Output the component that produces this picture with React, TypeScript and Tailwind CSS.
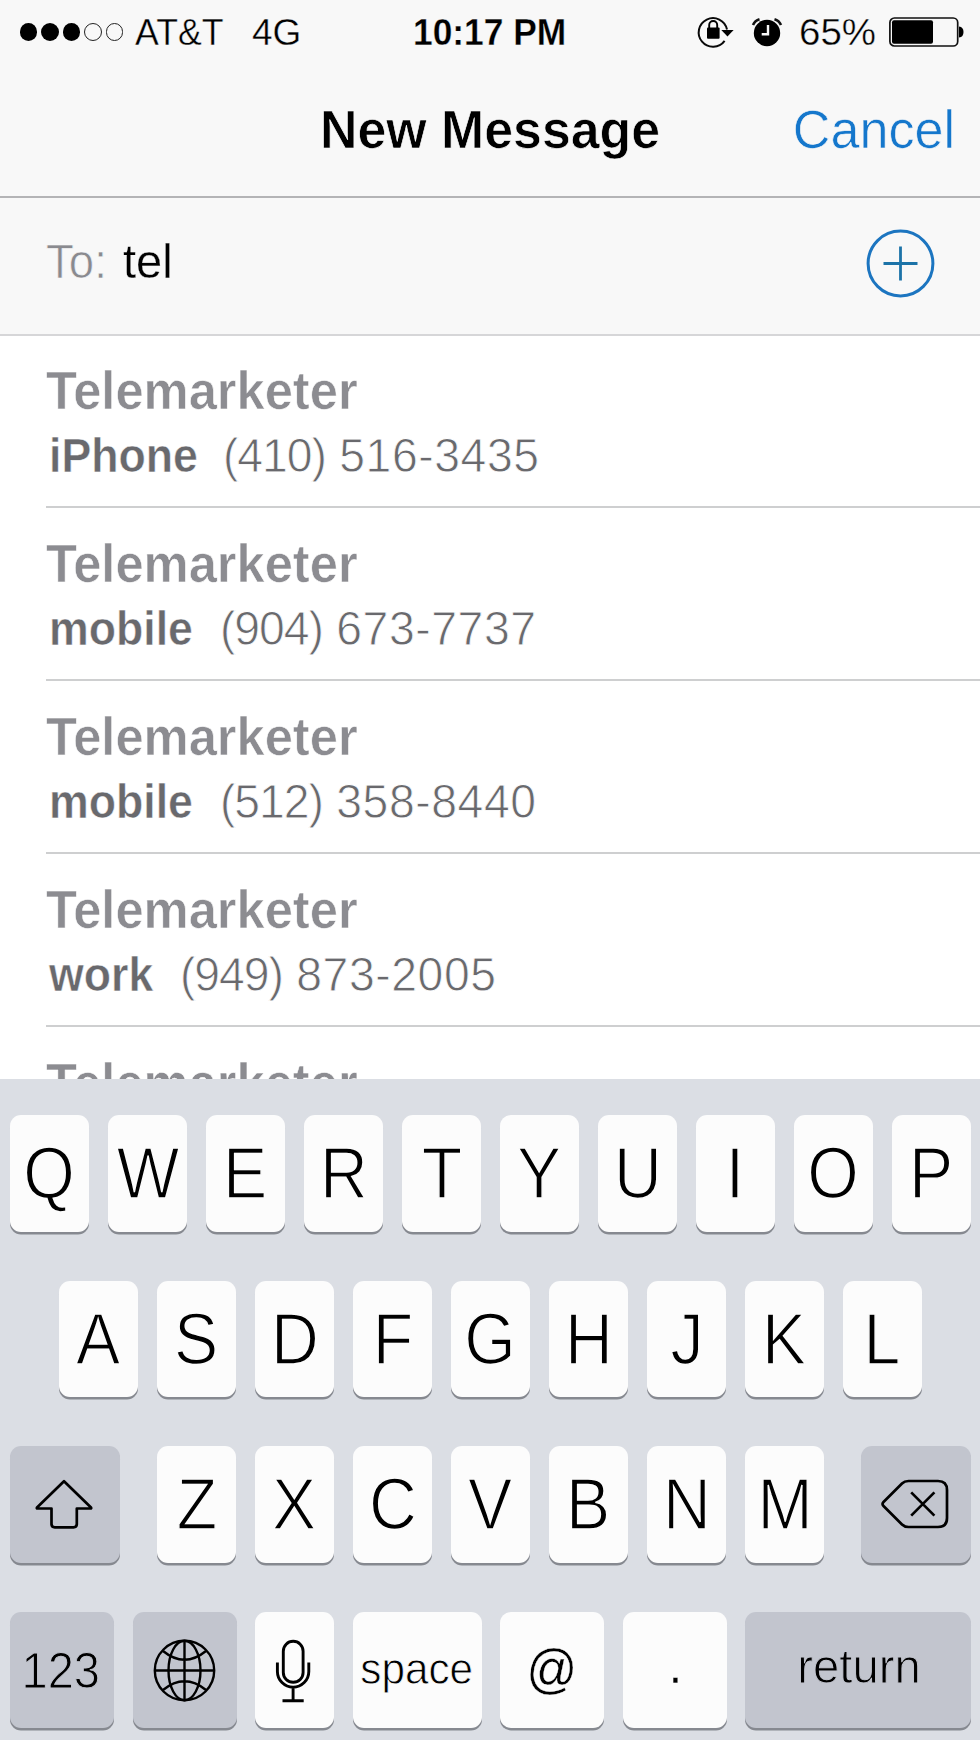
import type { ReactNode } from "react";

type Contact = { name: string; label: string; labelWidth: string; area: string; number: string };

const contacts: Contact[] = [
  { name: "Telemarketer", label: "iPhone", labelWidth: "w-[174px]", area: "(410)", number: " 516-3435" },
  { name: "Telemarketer", label: "mobile", labelWidth: "w-[171px]", area: "(904)", number: " 673-7737" },
  { name: "Telemarketer", label: "mobile", labelWidth: "w-[171px]", area: "(512)", number: " 358-8440" },
  { name: "Telemarketer", label: "work", labelWidth: "w-[131px]", area: "(949)", number: " 873-2005" },
];

function RotationLockIcon() {
  return (
    <svg className="h-[34px] w-[38px] shrink-0" viewBox="0 0 38 34" fill="none">
      <path d="M28.600 25.800A14.300 14.300 0 1 1 31 14.500" stroke="#0a0a0a" strokeWidth="2" />
      <path d="M25.300 15H37.600L31.500 21.600Z" fill="#000" />
      <rect x="11" y="12.600" width="12.600" height="11.200" rx="1" fill="#000" />
      <path d="M13.200 13.500V10a4 4 0 0 1 8 0v3.500" stroke="#000" strokeWidth="1.900" />
    </svg>
  );
}

function AlarmIcon() {
  return (
    <svg className="h-[30px] w-[32px] shrink-0" viewBox="0 0 32 30" fill="none">
      <circle cx="16" cy="16" r="13.2" fill="#000" />
      <path d="M2 8Q4 3.5 8.5 2.2M30 8Q28 3.5 23.5 2.2" stroke="#111" strokeWidth="2.6" />
      <path d="M17 8v9.2h-6.3" stroke="#f8f8f8" strokeWidth="2.4" />
    </svg>
  );
}

function BatteryIcon() {
  return (
    <svg className="h-[30px] w-[76px] shrink-0" viewBox="0 0 76 30" fill="none">
      <rect x="0.9" y="1" width="67.8" height="28" rx="4.5" stroke="#111" strokeWidth="1.7" />
      <rect x="3" y="3.3" width="41" height="23.4" rx="2" fill="#000" />
      <path d="M70 9.500q4.500.5 4.500 5.500t-4.500 5.500z" fill="#000" />
    </svg>
  );
}

function StatusBar() {
  return (
    <div className="flex h-16 items-center whitespace-nowrap text-[37px] leading-none text-black">
      <div className="flex w-[115px] shrink-0 gap-[4.3px] pl-[20px]">
        {[true, true, true, false, false].map((on, i) => (
          <span
            key={i}
            className={
              on
                ? "size-[17.2px] shrink-0 rounded-full bg-black"
                : "size-[17.2px] shrink-0 rounded-full border-[1.5px] border-[#222]"
            }
          />
        ))}
      </div>
      <span className="ml-5 w-[117px] shrink-0 origin-left scale-x-[0.965] [-webkit-text-stroke:0.4px_#f8f8f8]">AT&amp;T</span>
      <span className="w-[161px] shrink-0 [-webkit-text-stroke:0.4px_#f8f8f8]">4G</span>
      <span className="w-[283px] shrink-0 origin-left scale-x-[0.955] font-bold [-webkit-text-stroke:0.3px_#f8f8f8]">10:17 PM</span>
      <RotationLockIcon />
      <span className="w-[17px] shrink-0" />
      <AlarmIcon />
      <span className="ml-4 w-[90px] shrink-0 origin-left scale-x-[1.04] [-webkit-text-stroke:0.4px_#f8f8f8]">65%</span>
      <BatteryIcon />
    </div>
  );
}

function NavBar() {
  return (
    <div className="grid h-[134px] grid-cols-[1fr_auto_1fr] items-center border-b-2 border-[#b4b4b6] pb-[2px] leading-none whitespace-nowrap">
      <span />
      <h1 className="scale-x-[0.96] text-[54px] font-bold text-black [-webkit-text-stroke:0.7px_#f8f8f8]">New Message</h1>
      <button className="origin-right scale-x-[0.965] justify-self-end pr-[26px] text-[54px] text-[#1577cc] [-webkit-text-stroke:0.6px_#f8f8f8]">
        Cancel
      </button>
    </div>
  );
}

function Recipients() {
  return (
    <div className="flex h-[138px] items-center border-b-2 border-[#d6d6d8] pr-[45px] pl-[46px] text-[49px] leading-none">
      <span className="w-[77px] shrink-0 origin-left scale-x-[0.93] pb-[9px] text-[#8a8a8f] [-webkit-text-stroke:0.7px_#f8f8f8]">To:</span>
      <span className="origin-left scale-x-[0.96] pb-[9px] text-black [-webkit-text-stroke:0.3px_#f8f8f8]">tel</span>
      <svg className="mt-[-5px] ml-auto size-[69px]" viewBox="0 0 69 69" fill="none">
        <circle cx="34.5" cy="34.5" r="32.4" stroke="#1c75c0" strokeWidth="3" />
        <path d="M34.5 17.5v34M17.5 34.5h34" stroke="#1c73a8" strokeWidth="2.8" />
      </svg>
    </div>
  );
}

function ContactRow({ contact }: { contact: Contact }) {
  return (
    <div className="ml-[46px] flex h-[173px] shrink-0 flex-col border-b-2 border-[#cecfd0] pt-[23px] whitespace-nowrap">
      <div className="h-[66px] origin-left scale-x-[0.938] text-[54px] leading-[64px] font-bold text-[#8c8c91] [-webkit-text-stroke:0.6px_#ffffff]">
        {contact.name}
      </div>
      <div className="flex pl-[3px] text-[47.5px] leading-[64px] text-[#69696d]">
        <span className={`${contact.labelWidth} shrink-0 origin-left scale-x-[0.94] font-bold [-webkit-text-stroke:0.5px_#ffffff]`}>
          {contact.label}
        </span>
        <span className="origin-left scale-x-[0.975] whitespace-pre [-webkit-text-stroke:0.8px_#ffffff]">
          <span className="tracking-[-1.1px]">{contact.area}</span>
          <span className="tracking-[0.6px]">{contact.number}</span>
        </span>
      </div>
    </div>
  );
}

function Key({ width, dark = false, children }: { width: string; dark?: boolean; children: ReactNode }) {
  return (
    <button
      className={`${width} ${dark ? "bg-[#c2c5ce]" : "bg-[#fcfcfc]"} flex h-[116.5px] shrink-0 items-center justify-center rounded-[11px] leading-none whitespace-nowrap text-black shadow-[0_2.5px_0_#868990]`}
    >
      {children}
    </button>
  );
}

function Letters({ letters }: { letters: string }) {
  return (
    <>
      {letters.split("").map((letter) => (
        <Key key={letter} width="w-[79px]">
          <span className="scale-x-[0.92] text-[72px] [-webkit-text-stroke:1.5px_#fcfcfc]">{letter}</span>
        </Key>
      ))}
    </>
  );
}

function ShiftIcon() {
  return (
    <svg className="mr-[3px] h-[50px] w-[58px]" viewBox="0 0 58 50" fill="none" stroke="#000" strokeWidth="2.7" strokeLinejoin="round">
      <path d="M29 2.2 2 28.5q-.6 1 .6 1H16.5V45q0 3.3 3.3 3.3H38.500q3.300 0 3.300-3.300V29.500H55.400q1.200 0 .6-1Z" />
    </svg>
  );
}

function DeleteIcon() {
  return (
    <svg className="mr-[2px] h-[50px] w-[68px]" viewBox="0 0 68 50" fill="none" stroke="#000" strokeWidth="2.7" strokeLinejoin="round">
      <path d="M27.500 2H57q9 0 9 9V39q0 9-9 9H27.500q-4 0-6.500-2.500L2.500 27q-2-2 0-4L21 4.500Q23.500 2 27.500 2Z" />
      <path d="M30.200 13.400 53.400 36.600M53.400 13.400 30.200 36.600" />
    </svg>
  );
}

function GlobeIcon() {
  return (
    <svg className="mt-[2px] size-[63px]" viewBox="0 0 63 63" fill="none" stroke="#000" strokeWidth="2.4">
      <circle cx="31.500" cy="31.500" r="29.700" />
      <ellipse cx="31.500" cy="31.500" rx="16" ry="29.700" />
      <path d="M31.500 1.800V61.200M1.800 31.500H61.200M10 12q21.500 17.500 43 0M10 51q21.500-17.500 43 0" />
    </svg>
  );
}

function MicIcon() {
  return (
    <svg className="mt-[2px] mr-[3px] h-[64px] w-[36px]" viewBox="0 0 36 64" fill="none" stroke="#000" strokeWidth="2.9">
      <rect x="8.300" y="2.300" width="19.800" height="41" rx="9.900" />
      <path d="M2.400 23.500V32.500a15.700 15.700 0 0 0 31.400 0V23.500M18.100 48.500V61.500M7.500 61.700H28.700" />
    </svg>
  );
}

function Keyboard() {
  return (
    <div className="flex h-[661px] shrink-0 flex-col gap-[49px] overflow-hidden bg-[#dbdee4] pt-9 pr-[9px] pl-[10px]">
      <div className="flex gap-[19px]">
        <Letters letters="QWERTYUIOP" />
      </div>
      <div className="flex gap-[19px] pl-[49px]">
        <Letters letters="ASDFGHJKL" />
      </div>
      <div className="flex justify-between">
        <Key width="w-[110px]" dark>
          <ShiftIcon />
        </Key>
        <div className="flex gap-[19px]">
          <Letters letters="ZXCVBNM" />
        </div>
        <Key width="w-[110px]" dark>
          <DeleteIcon />
        </Key>
      </div>
      <div className="flex justify-between">
        <Key width="w-[104px]" dark>
          <span className="mr-[2px] scale-x-[0.94] pt-[2px] text-[50px] [-webkit-text-stroke:1px_#c2c5ce]">123</span>
        </Key>
        <Key width="w-[104px]" dark>
          <GlobeIcon />
        </Key>
        <Key width="w-[79px]">
          <MicIcon />
        </Key>
        <Key width="w-[129px]">
          <span className="scale-x-[0.960] pb-[2px] text-[44px] [-webkit-text-stroke:0.8px_#fcfcfc]">space</span>
        </Key>
        <Key width="w-[104px]">
          <span className="scale-x-[0.95] pb-[3px] text-[53px] [-webkit-text-stroke:0.400px_#fcfcfc]">@</span>
        </Key>
        <Key width="w-[104px]">
          <span className="pb-[8px] pl-[2px] text-[50px] [-webkit-text-stroke:0.3px_#fcfcfc]">.</span>
        </Key>
        <Key width="w-[226px]" dark>
          <span className="ml-[2px] scale-x-[0.965] pb-[7px] text-[49px] [-webkit-text-stroke:1px_#c2c5ce]">return</span>
        </Key>
      </div>
    </div>
  );
}

export default function App() {
  return (
    <main className="flex h-[1740px] w-[980px] flex-col overflow-hidden bg-white font-['Liberation_Sans',Arial,sans-serif]">
      <header className="shrink-0 bg-[#f8f8f8]">
        <StatusBar />
        <NavBar />
        <Recipients />
      </header>
      <section className="-mt-px flex min-h-0 flex-1 flex-col overflow-hidden">
        {contacts.map((contact, i) => (
          <ContactRow key={i} contact={contact} />
        ))}
        <div className="ml-[46px] shrink-0 origin-left scale-x-[0.938] pt-[23px] text-[54px] leading-[64px] font-bold text-[#8c8c91] [-webkit-text-stroke:0.6px_#ffffff]">
          Telemarketer
        </div>
      </section>
      <Keyboard />
    </main>
  );
}
